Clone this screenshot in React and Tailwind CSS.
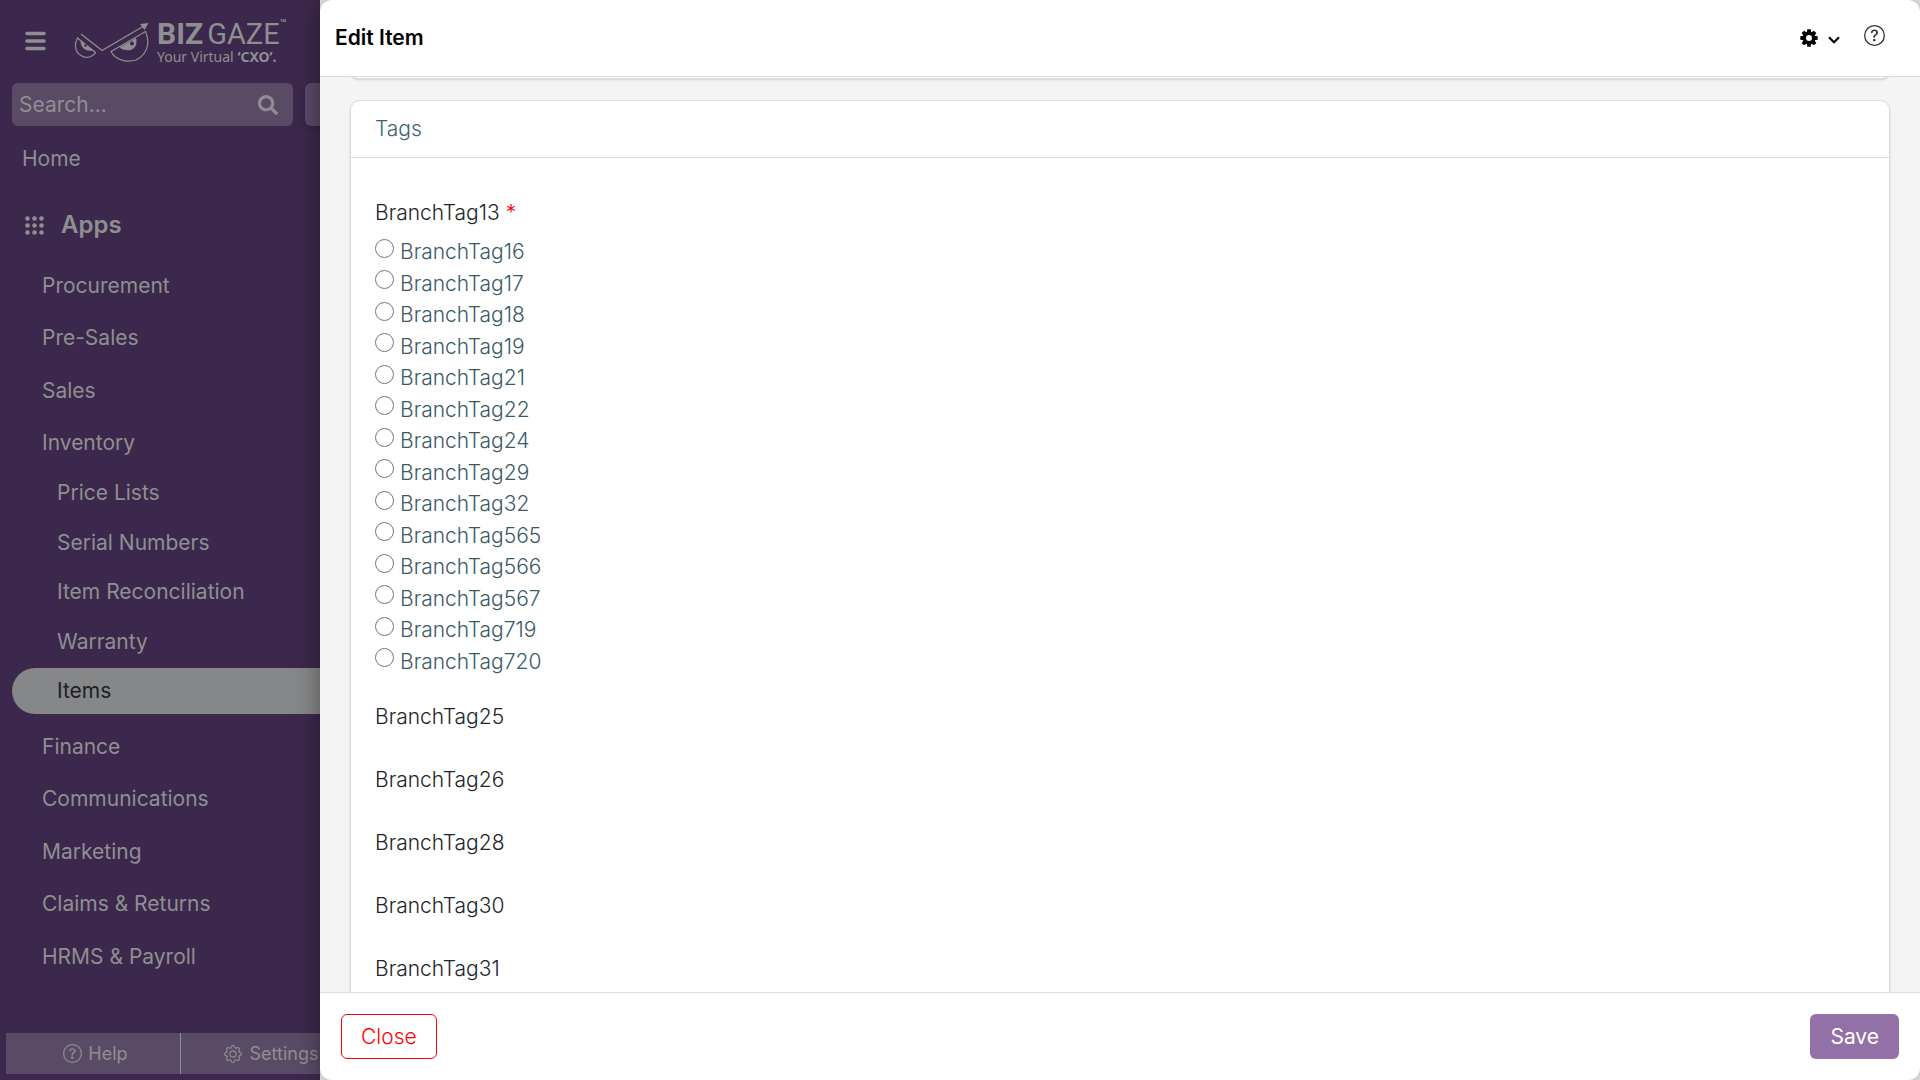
/**
 * Edit Item page
 * Dimmed app sidebar with the item form opened in a panel over it
 */

import { BsGear, BsQuestionCircle } from 'react-icons/bs';
import { FaSearch, FaCaretDown } from 'react-icons/fa';

const topApps = ['Procurement', 'Pre-Sales', 'Sales', 'Inventory'];

const inventoryItems = [
  'Price Lists',
  'Serial Numbers',
  'Item Reconciliation',
  'Warranty',
  'Items'
];

const bottomApps = [
  'Finance',
  'Communications',
  'Marketing',
  'Claims & Returns',
  'HRMS & Payroll'
];

const tagOptions = [16, 17, 18, 19, 21, 22, 24, 29, 32, 565, 566, 567, 719, 720];

const emptyTags = [25, 26, 28, 30, 31];

function Logo() {
  return (
    <a href="#" className="flex items-start" aria-label="Bizgaze">
      <svg width="76" height="42" viewBox="0 0 76 42" fill="none" stroke="currentColor">
        {/* Brow with arrow */}
        <path d="M7 14 L28 30.5 L69 6.5" strokeWidth="1.4" />
        <path d="M66 4 L74.5 3 L70.5 10 Z" fill="currentColor" stroke="none" />
        {/* Left eye */}
        <path d="M3.5 18 C0 25 1 32 7 35.5 C12 39 19 37 21.5 32.5 Z" strokeWidth="1.2" />
        <path d="M6.5 20.5 C6.5 27 11 32 19 30.5 Z" fill="currentColor" stroke="none" />
        <circle cx="11.5" cy="25.5" r="1.3" fill="#3c284c" stroke="none" />
        {/* Right eye */}
        <path d="M37 31.5 L71.5 11.5 C76.5 23 73 35 62 40 C52 43 41 39.5 37 31.5 Z" strokeWidth="1.2" />
        <path d="M45.5 27.5 L62 18 C64 25 60 30 55 30.2 C51 30.4 48 29.5 45.5 27.5 Z" fill="currentColor" stroke="none" />
        <circle cx="58" cy="23.5" r="2" fill="#3c284c" stroke="none" />
      </svg>
      <div className="ml-[7px] font-[Roboto,sans-serif]">
        <div className="flex items-start">
          <span className="text-[30px] leading-7 font-bold">BIZ</span>
          <span className="ml-1 text-[29px] leading-7">GAZE</span>
          <span className="text-[11px] leading-2 font-bold">™</span>
        </div>
        <div className="mt-px text-sm leading-4 font-['Noto_Sans',sans-serif]">
          Your Virtual <b>‘CXO’.</b>
        </div>
      </div>
    </a>
  );
}

function MenuIcon() {
  return (
    <svg width="21" height="20" viewBox="0 0 21 20" stroke="currentColor" strokeWidth="3.6" strokeLinecap="round">
      <path d="M2 2.500 H19 M2 10 H19 M2 17.500 H19" />
    </svg>
  );
}

function AppsIcon() {
  const steps = [2.5, 9.5, 16.5];
  return (
    <svg width="19" height="19" viewBox="0 0 19 19" fill="currentColor">
      {steps.map((y) => steps.map((x) => <circle key={`${x}-${y}`} cx={x} cy={y} r="2.3" />))}
    </svg>
  );
}

function CogIcon() {
  return (
    <svg width="18" height="18" viewBox="0 0 18 18">
      <g fill="currentColor">
        {[0, 45, 90, 135].map((angle) => (
          <path
            key={angle}
            d="M7.3 0.3 H10.7 L11.3 4 V14 L10.7 17.7 H7.3 L6.7 14 V4 Z"
            transform={`rotate(${angle} 9 9)`}
          />
        ))}
        <circle cx="9" cy="9" r="6.4" />
      </g>
      <circle cx="9" cy="9" r="3" fill="#fff" />
    </svg>
  );
}

function AppLink({ label }) {
  return (
    <a href="#" className="flex items-center pl-[42px]">
      {label}
    </a>
  );
}

function Sidebar() {
  return (
    <aside className="flex w-80 shrink-0 flex-col overflow-hidden bg-[#3c284c] text-[21px] text-[#8f8f91]">
      {/* Menu button and logo */}
      <div className="flex h-[83px] shrink-0 items-start pt-5 pl-[25px]">
        <button aria-label="Menu" className="mt-[11px] mr-7">
          <MenuIcon />
        </button>
        <Logo />
      </div>

      {/* Search */}
      <div className="flex h-[43px] shrink-0 gap-3 pl-3">
        <div className="flex w-[281px] shrink-0 items-center rounded-md bg-[#594a66] pr-[15px] pl-[7px]">
          <input
            type="text"
            placeholder="Search..."
            aria-label="Search"
            className="w-full min-w-0 bg-transparent outline-none placeholder:text-[#8f8f91]"
          />
          <button aria-label="Search" className="shrink-0">
            <FaSearch size={20} />
          </button>
        </div>
        <button
          aria-label="More"
          className="flex w-[43px] shrink-0 items-center justify-center rounded-md bg-[#594a66] shadow-md"
        >
          <FaCaretDown size={24} />
        </button>
      </div>

      {/* Navigation */}
      <nav className="min-h-0 flex-1">
        <a href="#" className="mt-[17px] block pl-[22px] leading-8">Home</a>
        <div className="mt-[34px] flex items-center gap-[17px] pl-[25px] text-2xl leading-8 font-semibold">
          <AppsIcon />
          Apps
        </div>
        <div className="mt-[18px] grid h-[210px] auto-rows-fr">
          {topApps.map((label) => <AppLink key={label} label={label} />)}
        </div>
        <div className="-mt-px grid h-[248px] auto-rows-fr pl-3">
          {inventoryItems.map((label) => (
            <a
              key={label}
              href="#"
              className={`my-[2px] flex items-center pl-[45px] ${
                label === 'Items' ? 'rounded-l-full bg-[#868788] text-[#1c2024]' : ''
              }`}
            >
              {label}
            </a>
          ))}
        </div>
        <div className="mt-1 grid h-[263px] auto-rows-fr">
          {bottomApps.map((label) => <AppLink key={label} label={label} />)}
        </div>
      </nav>

      {/* Footer links */}
      <div className="mb-[6px] ml-[6px] flex h-[41px] shrink-0 text-lg">
        <button className="flex w-[175px] shrink-0 items-center justify-center gap-[6px] border-r border-[#8f8f91] bg-[#594a66] pl-[5px]">
          <BsQuestionCircle size={19} />
          Help
        </button>
        <button className="flex w-[180px] shrink-0 items-center justify-center gap-2 bg-[#594a66]">
          <BsGear size={18} />
          Settings
        </button>
      </div>
    </aside>
  );
}

export default function App() {
  return (
    <div className="flex h-screen overflow-hidden bg-[#eceef1] font-[Inter,sans-serif]">
      <Sidebar />

      {/* Edit panel */}
      <main className="relative z-10 flex min-w-0 flex-1 flex-col">
        <div className="flex min-h-0 flex-1 flex-col overflow-hidden rounded-xl bg-white text-[21px] font-light shadow-[0_0_24px_rgba(0,0,0,0.4)]">
          <header className="flex h-[77px] shrink-0 items-center border-b border-[#d9dce3] pr-[35px] pl-[15px]">
            <h1 className="flex-1 font-semibold text-black">Edit Item</h1>
            <button aria-label="Options" className="mb-px flex items-center gap-[10px] text-black">
              <CogIcon />
              <svg width="12" height="8" viewBox="0 0 12 8" className="mt-1" fill="none" stroke="currentColor" strokeWidth="2.2">
                <path d="M1 1.200 L6 6.200 L11 1.200" />
              </svg>
            </button>
            <button aria-label="Help" className="mb-[5px] ml-6 text-[#2f3338]">
              <BsQuestionCircle size={21} />
            </button>
          </header>

          <div className="flex min-h-0 flex-1 flex-col overflow-hidden bg-[#f4f4f4] px-[30px]">
            {/* End of the previous card */}
            <div className="-mt-5 h-[22px] shrink-0 rounded-b-lg border border-[#d9dce3] bg-white shadow-sm" />

            <section className="mt-[21px] shrink-0 rounded-[10px] border border-[#d9dce3] bg-white pb-8 shadow-sm">
              <h2 className="border-b border-[#d9dce3] px-6 py-3 leading-8 text-[#436170]">Tags</h2>

              <div className="px-6 pt-[39px] text-[#212529]">
                <fieldset>
                  <legend className="leading-8">
                    BranchTag13 <span className="text-[#ff0000]">*</span>
                  </legend>
                  <div className="mt-[7px] grid h-[441px] auto-rows-fr text-[#3a5a68]">
                    {tagOptions.map((tag) => (
                      <label key={tag} className="flex items-center gap-[6px] leading-none">
                        <input type="radio" name="branchTag13" value={tag} className="mb-[7px] size-[19px]" />
                        BranchTag{tag}
                      </label>
                    ))}
                  </div>
                </fieldset>

                <div className="mt-6 flex flex-col gap-[31px] leading-8">
                  {emptyTags.map((tag) => (
                    <div key={tag}>BranchTag{tag}</div>
                  ))}
                </div>
              </div>
            </section>
          </div>

          <footer className="flex h-[88px] shrink-0 items-center justify-between border-t border-[#d9dce3] px-[21px]">
            <button className="h-[45px] rounded-md border border-[#ff0000] px-[19px] text-[#ff0000]">
              Close
            </button>
            <button className="h-[45px] rounded-md bg-[#9370a5] px-5 font-normal text-white">
              Save
            </button>
          </footer>
        </div>
      </main>
    </div>
  );
}
